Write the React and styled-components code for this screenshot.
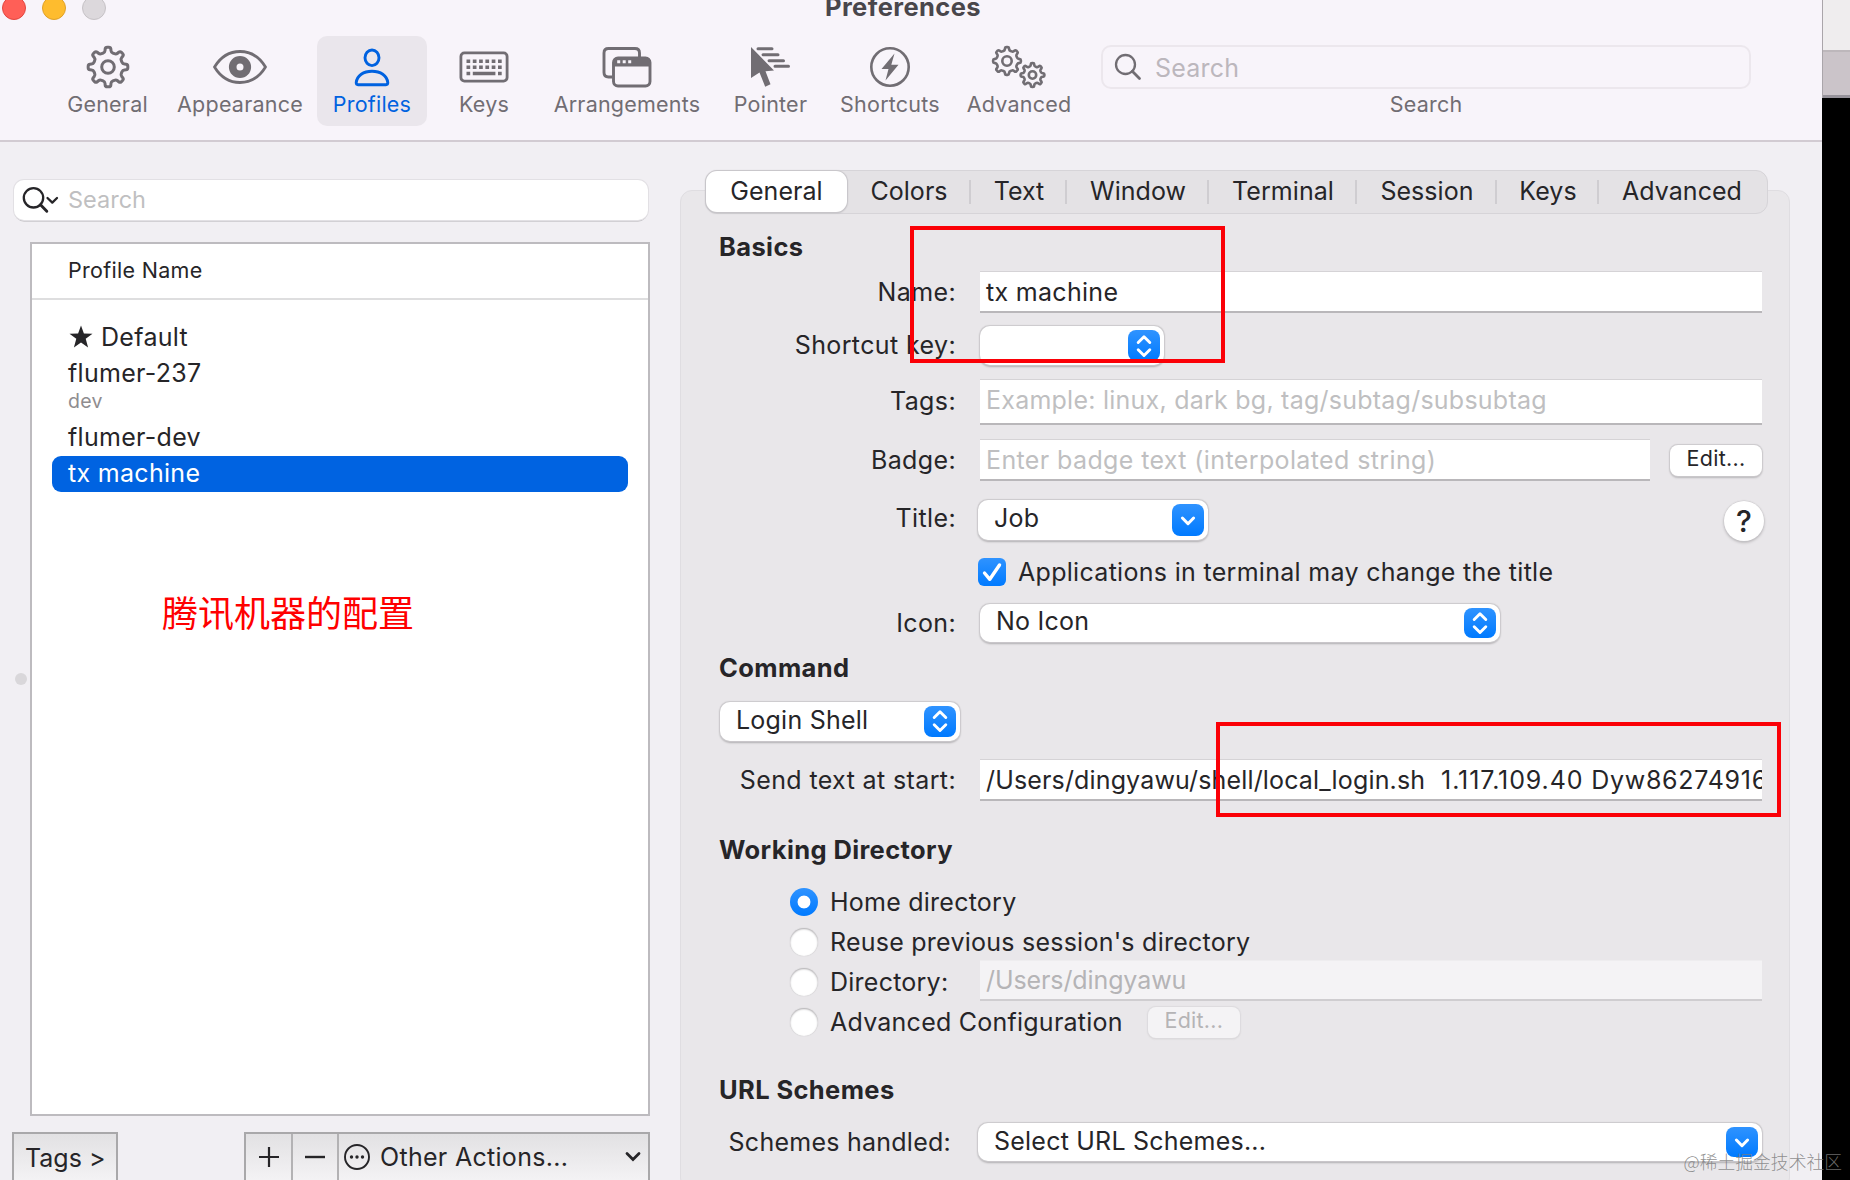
import React, { useState } from "react";
import styled, { createGlobalStyle, css } from "styled-components";

const GlobalStyle = createGlobalStyle`
  * { box-sizing: border-box; }
  body {
    margin: 0;
    overflow: hidden;
    background: #000;
    font-family: Inter, "Noto Sans CJK SC", sans-serif;
    font-size: 25px;
    letter-spacing: 0.3px;
    color: #262528;
  }
`;

const GRAY = "#716d73";

// rounded gear outline, teeth start at 12 o'clock
const gearPath = (cx, cy, outer, inner, teeth = 8) => {
  const pts = [];
  const step = (Math.PI * 2) / teeth;
  for (let i = 0; i < teeth; i++) {
    const a = i * step - Math.PI / 2;
    [
      [-0.17, outer],
      [0.17, outer],
      [0.27, inner],
      [0.73, inner],
    ].forEach(([k, r]) => {
      pts.push([cx + r * Math.cos(a + k * step), cy + r * Math.sin(a + k * step)]);
    });
  }
  const mix = (p, q, t) =>
    `${(p[0] + (q[0] - p[0]) * t).toFixed(2)} ${(p[1] + (q[1] - p[1]) * t).toFixed(2)}`;
  return (
    pts
      .map((p, i) => {
        const prev = pts[(i + pts.length - 1) % pts.length];
        const next = pts[(i + 1) % pts.length];
        return `${i ? "L" : "M"}${mix(p, prev, 0.35)}Q${p[0].toFixed(2)} ${p[1].toFixed(2)} ${mix(p, next, 0.35)}`;
      })
      .join("") + "Z"
  );
};

const GearIcon = () => (
  <svg width="46" height="46" fill="none" stroke="currentColor" strokeWidth="3">
    <path d={gearPath(23, 23, 20, 15)} strokeLinejoin="round" />
    <circle cx="23" cy="23" r="6.3" />
  </svg>
);

const EyeIcon = () => (
  <svg width="56" height="40" fill="none" stroke="currentColor" strokeWidth="2.8">
    <path d="M2.5 20C8 11 17 4.5 28 4.5S48 11 53.5 20C48 29 39 35.5 28 35.5S8 29 2.5 20Z" strokeLinejoin="round" />
    <circle cx="28" cy="20" r="7.3" strokeWidth="7.6" />
  </svg>
);

const PersonIcon = () => (
  <svg width="38" height="40" fill="none" stroke="currentColor" strokeWidth="2.9">
    <ellipse cx="19" cy="10.8" rx="7" ry="7.8" />
    <path d="M5 37.7Q3.2 37.7 3.2 35.6C4 28.5 10.5 24.2 19 24.2S34 28.5 34.8 35.6Q34.8 37.7 33 37.7Z" />
  </svg>
);

const KeyboardIcon = () => (
  <svg width="50" height="32" fill="none" stroke="currentColor">
    <rect x="1.9" y="1.9" width="46.2" height="28.2" rx="3.5" strokeWidth="2.8" />
    <path d="M7.5 10.3H43" strokeWidth="3.5" strokeDasharray="3.7 2.6" />
    <path d="M7.5 16.3H43" strokeWidth="3.5" strokeDasharray="3.7 2.6" />
    <path d="M7.5 22.5h3.7M13.8 22.5h22.6M39 22.5h3.7" strokeWidth="3.5" />
  </svg>
);

const WindowsIcon = () => (
  <svg width="50" height="42" fill="none" stroke="currentColor" strokeWidth="2.9">
    <path d="M10.5 31H6.5Q2 31 2 26.5V7Q2 2.5 6.5 2.5H33Q37.5 2.5 37.5 7V11" />
    <rect x="11.5" y="12" width="36.5" height="28" rx="4.5" />
    <path d="M11.5 20.5V16.5Q11.5 12 16 12H43.5Q48 12 48 16.5V20.5Z" fill="currentColor" stroke="none" />
    <path d="M15.2 15.8h3M20.7 15.8h3M26.2 15.8h3" stroke="#f8f4fa" strokeWidth="3" />
  </svg>
);

const PointerIcon = () => (
  <svg width="42" height="42" fill="currentColor">
    <path
      d="M8 2.8H22M13 8.7H28M19 14.7H33.5M25 20.3H38.5"
      stroke="currentColor"
      strokeWidth="3"
      strokeLinecap="round"
    />
    <path
      d="M1 1L24 24.5L15.5 25.3L20.5 38.2L15.2 40.8L9.5 26.5L1 32Z"
      stroke="#f8f4fa"
      strokeWidth="3"
      paintOrder="stroke"
    />
  </svg>
);

const BoltIcon = () => (
  <svg width="42" height="42">
    <circle cx="21" cy="21" r="18.7" fill="none" stroke="currentColor" strokeWidth="2.6" />
    <path d="M25.5 7.5L12.5 23H19.5L16.5 34.5L29.5 18.8H22.3Z" fill="currentColor" />
  </svg>
);

const GearsIcon = () => (
  <svg width="56" height="46" fill="none" stroke="currentColor" strokeWidth="2.6">
    <path d={gearPath(16, 17, 14, 10.8)} strokeLinejoin="round" />
    <circle cx="16" cy="17" r="4.7" />
    <path d={gearPath(41.5, 31, 12, 9)} strokeLinejoin="round" />
    <circle cx="41.5" cy="31" r="3.7" />
  </svg>
);

const SearchIcon = () => (
  <svg width="28" height="28" fill="none" stroke="currentColor" strokeWidth="2.3" strokeLinecap="round">
    <circle cx="11.5" cy="11.5" r="9.5" />
    <path d="M18.3 18.3L25.5 25.5" strokeWidth="2.8" />
  </svg>
);

const SearchMenuIcon = () => (
  <svg width="38" height="28" fill="none" stroke="#262528" strokeWidth="2.3" strokeLinecap="round">
    <circle cx="11.5" cy="11.8" r="9.7" />
    <path d="M18.5 18.8L24.8 25.2" strokeWidth="2.9" />
    <path d="M25.5 12L30.3 16.6L35 12" strokeLinejoin="round" />
  </svg>
);

const UpDown = () => (
  <svg width="32" height="32" fill="none" stroke="#fff" strokeWidth="2.9" strokeLinecap="round" strokeLinejoin="round">
    <path d="M10.2 12.5L16 6.8L21.8 12.5M10.2 19.8L16 25.5L21.8 19.8" />
  </svg>
);

const Down = () => (
  <svg width="32" height="32" fill="none" stroke="#fff" strokeWidth="3" strokeLinecap="round" strokeLinejoin="round">
    <path d="M10.4 14L16 19.7L21.6 14" />
  </svg>
);

const toolbarItems = [
  { name: "General", width: 111, icon: <GearIcon /> },
  { name: "Appearance", width: 154, icon: <EyeIcon /> },
  { name: "Profiles", width: 110, icon: <PersonIcon /> },
  { name: "Keys", width: 114, icon: <KeyboardIcon /> },
  { name: "Arrangements", width: 172, icon: <WindowsIcon /> },
  { name: "Pointer", width: 115, icon: <PointerIcon /> },
  { name: "Shortcuts", width: 124, icon: <BoltIcon /> },
  { name: "Advanced", width: 134, icon: <GearsIcon /> },
];

const tabs = [
  { name: "General", width: 141 },
  { name: "Colors", width: 124 },
  { name: "Text", width: 96 },
  { name: "Window", width: 142 },
  { name: "Terminal", width: 148 },
  { name: "Session", width: 140 },
  { name: "Keys", width: 102 },
  { name: "Advanced", width: 166 },
];

const directories = ["Home directory", "Reuse previous session's directory", "Directory:", "Advanced Configuration"];

const PopUp = ({ width, height, children, down, left = 0 }) => (
  <Select $width={width} $height={height} $left={left}>
    <span>{children}</span>
    <Arrow $height={height - 8}>{down ? <Down /> : <UpDown />}</Arrow>
  </Select>
);

export default function App() {
  const [tab, setTab] = useState("General");
  const [directory, setDirectory] = useState(0);

  return (
    <Desktop>
      <GlobalStyle />
      <Window>
        <Header>
          <TitleBar>
            <Light $color="#ff5f57" $ring="#e2463f" />
            <Light $color="#febc2e" $ring="#e0a028" />
            <Light $color="#dcd8dc" $ring="#c6c2c6" />
            <Title>Preferences</Title>
          </TitleBar>
          <Toolbar>
            {toolbarItems.map((item) => (
              <ToolItem key={item.name} $width={item.width} $active={item.name === "Profiles"}>
                <IconBox>{item.icon}</IconBox>
                {item.name}
              </ToolItem>
            ))}
            <ToolSearch>
              <ToolSearchField>
                <SearchIcon />
                <span>Search</span>
              </ToolSearchField>
              Search
            </ToolSearch>
          </Toolbar>
        </Header>

        <Main>
          <Sidebar>
            <SideSearch>
              <SearchMenuIcon />
              <span>Search</span>
            </SideSearch>
            <ListRow>
              <Handle />
              <ProfileList>
                <ListHeader>Profile Name</ListHeader>
                <Profile $top={20}>
                  <Star width="24" height="24" viewBox="0 0 24 24">
                    <path d="M12 0.5L14.9 8.4L23.5 8.7L16.7 13.8L19.1 22.5L12 17.5L4.9 22.5L7.3 13.8L0.5 8.7L9.1 8.4Z" />
                  </Star>
                  Default
                </Profile>
                <Profile>flumer-237</Profile>
                <ProfileTag>dev</ProfileTag>
                <Profile>flumer-dev</Profile>
                <Profile $selected>tx machine</Profile>
                <Note>腾讯机器的配置</Note>
              </ProfileList>
            </ListRow>
            <Footer>
              <TagsButton>Tags &gt;</TagsButton>
              <Actions>
                <ActionCell $width={47}>
                  <svg width="22" height="22" stroke="#262528" strokeWidth="2.2">
                    <path d="M1 11H21M11 1V21" />
                  </svg>
                </ActionCell>
                <ActionCell $width={46}>
                  <svg width="22" height="22" stroke="#262528" strokeWidth="2.4">
                    <path d="M1 11H21" />
                  </svg>
                </ActionCell>
                <OtherActions>
                  <svg width="28" height="28" fill="#262528">
                    <circle cx="14" cy="14" r="12" fill="none" stroke="#262528" strokeWidth="1.9" />
                    <circle cx="8.5" cy="14" r="1.7" />
                    <circle cx="14" cy="14" r="1.7" />
                    <circle cx="19.5" cy="14" r="1.7" />
                  </svg>
                  <span>Other Actions...</span>
                  <svg width="18" height="14" fill="none" stroke="#262528" strokeWidth="2.8">
                    <path d="M3 3.5L9 9.5L15 3.5" strokeLinecap="round" />
                  </svg>
                </OtherActions>
              </Actions>
            </Footer>
          </Sidebar>

          <Panel>
            <TabBar>
              {tabs.map((t, i) => (
                <Tab
                  key={t.name}
                  $width={t.width}
                  $active={t.name === tab}
                  $divider={i > 0 && i < tabs.length - 1}
                  onClick={() => setTab(t.name)}
                >
                  {t.name}
                </Tab>
              ))}
            </TabBar>
            <Form>
              <Heading $top={18}>Basics</Heading>
              <Row $top={9} $height={42}>
                <Label>Name:</Label>
                <Field>tx machine</Field>
              </Row>
              <Row $top={13} $height={39}>
                <Label $up={1}>Shortcut key:</Label>
                <PopUp width={184} height={39} />
              </Row>
              <Row $top={14} $height={46}>
                <Label $up={3}>Tags:</Label>
                <Field $placeholder $spacing={0.24} $up={3}>Example: linux, dark bg, tag/subtag/subsubtag</Field>
              </Row>
              <Row $top={14} $height={42}>
                <Label>Badge:</Label>
                <Field $placeholder $spacing={0.38}>Enter badge text (interpolated string)</Field>
                <EditButton $left={20}>Edit...</EditButton>
              </Row>
              <Row $top={18} $height={41}>
                <Label $up={3}>Title:</Label>
                <PopUp width={230} height={40} left={-2} down>Job</PopUp>
                <Help>?</Help>
              </Row>
              <Row $top={18} $height={28}>
                <Checkbox>
                  <svg width="28" height="28" fill="none" stroke="#fff" strokeWidth="3.4" strokeLinecap="round" strokeLinejoin="round">
                    <path d="M6.5 15L11.8 21.3L21.5 7" />
                  </svg>
                </Checkbox>
                Applications in terminal may change the title
              </Row>
              <Row $top={17} $height={39}>
                <Label>Icon:</Label>
                <PopUp width={520} height={38}>No Icon</PopUp>
              </Row>
              <Heading $top={11}>Command</Heading>
              <Row $top={18} $height={40}>
                <PopUp width={240} height={39} left={1}>Login Shell</PopUp>
              </Row>
              <Row $top={18} $height={42}>
                <Label>Send text at start:</Label>
                <Field $spacing={0.15}>
                  /Users/dingyawu/shell/local_login.sh
                  <Digits $spacing={0.9}>{"  1.117.109.40"}</Digits>
                  <Digits $spacing={0.72}>{" Dyw86274916"}</Digits>
                </Field>
              </Row>
              <Heading $top={34}>Working Directory</Heading>
              <Directories>
                {directories.map((name, i) => (
                  <Row key={name} $height={40} onClick={() => setDirectory(i)}>
                    <Radio $checked={directory === i} />
                    <RadioLabel $field={i === 2}>{name}</RadioLabel>
                    {i === 2 && <Field $disabled $spacing={-0.1}>/Users/dingyawu</Field>}
                    {i === 3 && <EditButton $left={25} $disabled>Edit...</EditButton>}
                  </Row>
                ))}
              </Directories>
              <Heading $top={33}>URL Schemes</Heading>
              <Row $top={18} $height={38}>
                <Label $short>Schemes handled:</Label>
                <PopUp width={784} height={38} left={-2} down>Select URL Schemes...</PopUp>
              </Row>
            </Form>
          </Panel>
        </Main>
      </Window>
      <Behind />
      <RedBox $x={910} $y={226} $width={315} $height={137} />
      <RedBox $x={1216} $y={722} $width={565} $height={95} />
      <Watermark>@稀土掘金技术社区</Watermark>
    </Desktop>
  );
}

const Desktop = styled.div`
  position: relative;
  display: flex;
  width: 1850px;
  height: 1180px;
  overflow: hidden;
  background: #000;
`;

const Window = styled.div`
  display: flex;
  flex-direction: column;
  width: 1822px;
  height: 1180px;
  overflow: hidden;
  background: #f1eff3;
`;

const Behind = styled.div`
  width: 28px;
  height: 98px;
  background: linear-gradient(#efedee 0 50px, #bdb7bb 50px 52px, #cbc4c9 52px 95px, #96929a 95px);
  box-shadow: inset 1px 0 #aaa5aa;
`;

const Header = styled.div`
  flex: none;
  height: 142px;
  background: #f8f4fa;
  border-bottom: 2px solid #d2cbd2;
`;

const TitleBar = styled.div`
  display: flex;
  gap: 16px;
  height: 36px;
  padding-left: 2px;
`;

const Light = styled.i`
  width: 24px;
  height: 24px;
  margin-top: -4px;
  border-radius: 50%;
  background: ${(p) => p.$color};
  border: 1px solid ${(p) => p.$ring};
`;

const Title = styled.div`
  margin: -9px 0 0 703px;
  font-size: 25.5px;
  letter-spacing: 0.4px;
  line-height: 31px;
  font-weight: 700;
  color: #49464b;
`;

const Toolbar = styled.div`
  display: flex;
  padding-left: 52px;
  font-size: 21.5px;
  letter-spacing: 0.22px;
  line-height: 26px;
  color: ${GRAY};
`;

const ToolItem = styled.div`
  display: flex;
  flex-direction: column;
  align-items: center;
  width: ${(p) => p.$width}px;
  height: 90px;
  padding-top: 7px;
  border-radius: 10px;
  ${(p) =>
    p.$active &&
    css`
      background: #eae6ec;
      color: #0062e0;
    `}
`;

const IconBox = styled.div`
  display: flex;
  align-items: center;
  height: 48px;
`;

const ToolSearch = styled.div`
  width: 650px;
  margin: 9px 0 0 15px;
  text-align: center;
`;

const ToolSearchField = styled.div`
  display: flex;
  align-items: center;
  gap: 13px;
  height: 44px;
  margin-bottom: 2px;
  padding-left: 11px;
  border: 2px solid #ece7ed;
  border-radius: 10px;
  font-size: 25px;
  span {
    padding-top: 1px;
    color: #bcb7bd;
  }
`;

const Main = styled.div`
  display: flex;
  flex: 1;
  min-height: 0;
`;

const Sidebar = styled.div`
  width: 650px;
  flex: none;
  padding: 38px 0 0 12px;
`;

const SideSearch = styled.div`
  display: flex;
  align-items: center;
  gap: 8px;
  width: 634px;
  height: 40px;
  margin-left: 2px;
  padding-left: 8px;
  border-radius: 10px;
  background: #fff;
  box-shadow: 0 0 0 1px #e2e0e4, 0 1.5px 0.5px #b4b2b6;
  font-size: 23.5px;
  letter-spacing: 0;
  color: #bfbfc1;
  span {
    padding-bottom: 2px;
  }
`;

const ListRow = styled.div`
  display: flex;
  align-items: center;
  justify-content: space-between;
  height: 874px;
  margin-top: 22px;
  padding-left: 3px;
`;

const Handle = styled.i`
  width: 12px;
  height: 12px;
  border-radius: 50%;
  background: #d9d7da;
`;

const ProfileList = styled.div`
  width: 620px;
  height: 100%;
  border: 2px solid #bdbbbf;
  background: #fff;
`;

const ListHeader = styled.div`
  height: 56px;
  padding-left: 36px;
  border-bottom: 2px solid #dededf;
  font-size: 21.5px;
  line-height: 53px;
`;

const Profile = styled.div`
  display: flex;
  align-items: center;
  height: 36px;
  margin: ${(p) => p.$top || 0}px 20px 0;
  padding: 0 0 3px 16px;
  border-radius: 9px;
  ${(p) => p.$selected && "background: #0063e1; color: #fff;"}
`;

const Star = styled.svg`
  margin: 0 8px 0 1px;
  fill: #262528;
`;

const ProfileTag = styled.div`
  height: 28px;
  padding-left: 36px;
  font-size: 19.5px;
  line-height: 19px;
  color: #8f8d90;
`;

const Note = styled.div`
  margin: 93px 0 0 130px;
  font-family: "Noto Sans CJK SC", sans-serif;
  font-size: 36px;
  letter-spacing: 0;
  line-height: 52px;
  color: #f00;
`;

const Footer = styled.div`
  display: flex;
  justify-content: space-between;
  margin-top: 16px;
`;

const bevel = css`
  height: 60px;
  border: 2px solid #a9a8aa;
  background: linear-gradient(#e2e1e3, #f7f6f8);
`;

const TagsButton = styled.div`
  ${bevel}
  width: 106px;
  padding-left: 11px;
  letter-spacing: 0;
  line-height: 48px;
`;

const Actions = styled.div`
  ${bevel}
  display: flex;
  width: 406px;
`;

const ActionCell = styled.div`
  display: flex;
  justify-content: center;
  width: ${(p) => p.$width}px;
  padding-top: 12px;
  border-right: 2px solid #b3b2b4;
`;

const OtherActions = styled.div`
  display: flex;
  align-items: center;
  flex: 1;
  height: 46px;
  padding: 0 6px 0 4px;
  span {
    flex: 1;
    margin-left: 9px;
  }
`;

const Panel = styled.div`
  width: 1110px;
  height: 1000px;
  margin: 48px 0 0 30px;
  border: 1px solid #dfdde1;
  border-radius: 12px;
  background: #e9e7ea;
`;

const TabBar = styled.div`
  display: flex;
  width: 1063px;
  height: 44px;
  margin: -21px 0 0 24px;
  border: 1px solid #d6d4d8;
  border-radius: 12px;
  background: #e4e2e5;
  letter-spacing: 0.05px;
`;

const Tab = styled.div`
  display: flex;
  align-items: center;
  justify-content: center;
  width: ${(p) => p.$width}px;
  height: 41px;
  padding-bottom: 2px;
  ${(p) =>
    p.$divider &&
    css`
      background: linear-gradient(#cfcdd1, #cfcdd1) right center / 2px 24px no-repeat;
    `}
  ${(p) =>
    p.$active &&
    css`
      border-radius: 11px;
      background: #fff;
      box-shadow: 0 0 1px 1px #c8c6ca, 0 1px 2px #b4b2b6;
    `}
`;

const Form = styled.div`
  padding: 0 27px 0 38px;
`;

const Heading = styled.div`
  height: 30px;
  margin-top: ${(p) => p.$top}px;
  font-size: 25.5px;
  letter-spacing: 0.38px;
  line-height: 30px;
  font-weight: 700;
`;

const Row = styled.div`
  display: flex;
  align-items: center;
  height: ${(p) => p.$height}px;
  margin-top: ${(p) => p.$top || 0}px;
`;

const Label = styled.div`
  flex: none;
  width: ${(p) => (p.$short ? 232 : 237)}px;
  margin-right: ${(p) => (p.$short ? 29 : 24)}px;
  padding-bottom: ${(p) => p.$up || 0}px;
  letter-spacing: ${(p) => (p.$short ? 0.25 : 0.38)}px;
  text-align: right;
`;

const Field = styled.div`
  flex: 1;
  height: 100%;
  min-width: 0;
  padding: 0 0 ${(p) => p.$up || 0}px 6px;
  display: flex;
  align-items: center;
  overflow: hidden;
  white-space: pre;
  letter-spacing: ${(p) => p.$spacing || 0.3}px;
  background: #fff;
  border-top: 1px solid #d5d3d6;
  border-bottom: 2px solid #b9b7ba;
  ${(p) => p.$placeholder && "color: #bfbfc1;"}
  ${(p) =>
    p.$disabled &&
    css`
      border-top-color: #eeedef;
      border-bottom-color: #cfcdd0;
      background: #f4f3f5;
      color: #b5b4b6;
    `}
`;

const Digits = styled.span`
  letter-spacing: ${(p) => p.$spacing}px;
`;

const Select = styled.div`
  display: flex;
  align-items: center;
  justify-content: space-between;
  width: ${(p) => p.$width}px;
  height: ${(p) => p.$height}px;
  margin-left: ${(p) => p.$left}px;
  padding: 0 4px 0 16px;
  border-radius: 10px;
  background: #fff;
  box-shadow: 0 0 1px 0.5px #cbc9cc, 0 1.5px 2px #b0aeb1;
  letter-spacing: 0.22px;
  span {
    padding-bottom: 3px;
  }
`;

const Arrow = styled.i`
  display: flex;
  align-items: center;
  width: 32px;
  height: ${(p) => p.$height}px;
  border-radius: 8px;
  background: linear-gradient(#2f93ff, #007aff);
`;

const EditButton = styled.div`
  width: 92px;
  height: 31px;
  margin-left: ${(p) => p.$left}px;
  border-radius: 8px;
  background: #fff;
  box-shadow: 0 0 1px 0.5px #cbc9cc, 0 1.5px 2px #b8b6b9;
  font-size: 21.5px;
  line-height: 27px;
  text-align: center;
  ${(p) =>
    p.$disabled &&
    css`
      background: #f4f3f5;
      box-shadow: 0 0 1px 0.5px #dddbde, 0 1px 2px #cfcdd0;
      color: #b5b4b6;
    `}
`;

const Help = styled.div`
  width: 40px;
  height: 40px;
  margin: 2px -2px 0 auto;
  border-radius: 50%;
  background: #fff;
  box-shadow: 0 0 1px 0.5px #cbc9cc, 0 1.5px 3px #b0aeb1;
  font-size: 30px;
  font-weight: 500;
  line-height: 41px;
  text-align: center;
`;

const Checkbox = styled.i`
  width: 28px;
  height: 28px;
  margin: 0 12px 0 259px;
  border-radius: 6px;
  background: linear-gradient(#2f93ff, #007aff);
`;

const Directories = styled.div`
  margin-top: 17px;
  padding-left: 71px;
  letter-spacing: 0.24px;
  ${Field} {
    height: 41px;
    margin-top: -3px;
  }
`;

const Radio = styled.i`
  flex: none;
  width: 28px;
  height: 28px;
  border-radius: 50%;
  background: #fff;
  box-shadow: inset 0 1px 2px #aaa8ab, 0 0 1px #bab8bb;
  ${(p) =>
    p.$checked &&
    css`
      background: radial-gradient(circle, #fff 6px, transparent 6.8px), linear-gradient(#2f93ff, #007aff);
      box-shadow: none;
    `}
`;

const RadioLabel = styled.div`
  margin-left: 12px;
  ${(p) => p.$field && "width: 150px;"}
`;

const RedBox = styled.div`
  position: absolute;
  left: ${(p) => p.$x}px;
  top: ${(p) => p.$y}px;
  width: ${(p) => p.$width}px;
  height: ${(p) => p.$height}px;
  border: 4px solid #fb0007;
`;

const Watermark = styled.div`
  position: absolute;
  right: 8px;
  bottom: 6px;
  font-family: "Noto Sans CJK SC", sans-serif;
  font-size: 17.8px;
  letter-spacing: 0;
  font-weight: 300;
  line-height: 26px;
  color: rgba(125, 125, 125, 0.85);
`;
